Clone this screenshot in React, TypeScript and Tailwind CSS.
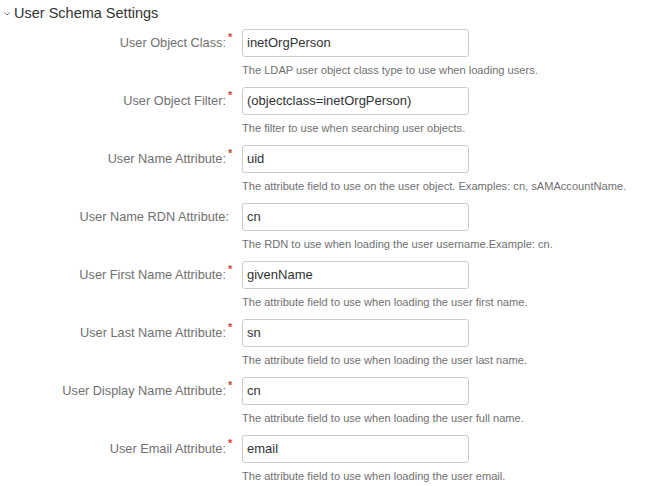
import React from "react";

type Campo = { label: string; value: string; help: string; required: boolean };

const campos: Campo[] = [
  { label: "User Object Class:", value: "inetOrgPerson", help: "The LDAP user object class type to use when loading users.", required: true },
  { label: "User Object Filter:", value: "(objectclass=inetOrgPerson)", help: "The filter to use when searching user objects.", required: true },
  { label: "User Name Attribute:", value: "uid", help: "The attribute field to use on the user object. Examples: cn, sAMAccountName.", required: true },
  { label: "User Name RDN Attribute:", value: "cn", help: "The RDN to use when loading the user username.Example: cn.", required: false },
  { label: "User First Name Attribute:", value: "givenName", help: "The attribute field to use when loading the user first name.", required: true },
  { label: "User Last Name Attribute:", value: "sn", help: "The attribute field to use when loading the user last name.", required: true },
  { label: "User Display Name Attribute:", value: "cn", help: "The attribute field to use when loading the user full name.", required: true },
  { label: "User Email Attribute:", value: "email", help: "The attribute field to use when loading the user email.", required: true },
];

export default function App() {
  return (
    <div className="w-[657px] h-[486px] bg-white overflow-hidden font-['Liberation_Sans',Arial,sans-serif]">
      <div className="flex items-center h-[26px] pl-[4px]">
        <svg width="6" height="4" viewBox="0 0 6 4" className="mr-[4px] mt-[2px]">
          <path d="M0.5 0.5 L3 3 L5.5 0.5" fill="none" stroke="#707070" strokeWidth="1" />
        </svg>
        <h2 className="text-[14.5px] text-[#333333] leading-none">User Schema Settings</h2>
      </div>

      <div className="flex flex-col pt-[3px]">
        {campos.map((c) => (
          <div key={c.label} className="flex h-[58px]">
            <div className="w-[233px] shrink-0 h-[28px] flex items-center justify-end text-[12.75px] text-[#707070]">
              <span>{c.label}</span>
              {c.required ? (
                <span className="text-[#d04437] text-[11px] font-bold self-start mt-[3px] ml-[2px] w-[5px] leading-none">*</span>
              ) : (
                <span className="w-[4px]" />
              )}
            </div>
            <div className="ml-[9px] flex flex-col">
              <div className="w-[227px] h-[28px] border border-[#cccccc] rounded-[3px] flex items-center px-[4px] text-[13px] text-[#333333]">
                {c.value}
              </div>
              <p className="mt-[6px] text-[11.1px] leading-[14px] text-[#707070] whitespace-nowrap">{c.help}</p>
            </div>
          </div>
        ))}
      </div>
    </div>
  );
}
